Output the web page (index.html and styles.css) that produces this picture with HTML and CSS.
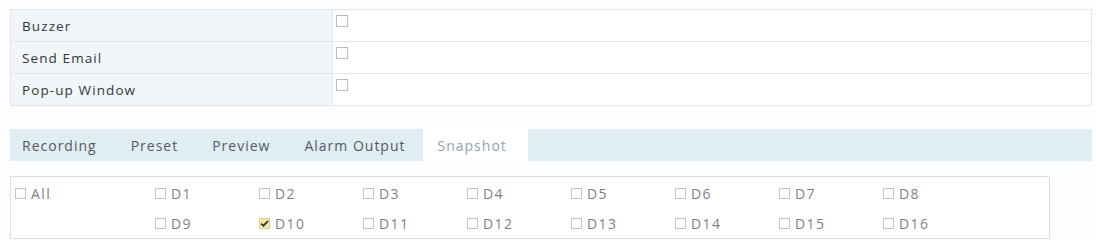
FILE: index.html
```html
<!DOCTYPE html>
<html>
<head>
<meta charset="utf-8">
<link rel="stylesheet" href="styles.css">
</head>
<body>
<div class="page">
  <div class="table">
    <div class="row"><div class="label">Buzzer</div><div class="value"><span class="cb"></span></div></div>
    <div class="row"><div class="label">Send Email</div><div class="value"><span class="cb"></span></div></div>
    <div class="row"><div class="label">Pop-up Window</div><div class="value"><span class="cb"></span></div></div>
  </div>

  <div class="tabs">
    <div class="tab">Recording</div>
    <div class="tab">Preset</div>
    <div class="tab">Preview</div>
    <div class="tab">Alarm Output</div>
    <div class="tab active">Snapshot</div>
    <div class="tab-fill"></div>
  </div>

  <div class="channels">
    <label class="ch"><span class="cb"></span>All</label>
    <label class="ch"><span class="cb"></span>D1</label>
    <label class="ch"><span class="cb"></span>D2</label>
    <label class="ch"><span class="cb"></span>D3</label>
    <label class="ch"><span class="cb"></span>D4</label>
    <label class="ch"><span class="cb"></span>D5</label>
    <label class="ch"><span class="cb"></span>D6</label>
    <label class="ch"><span class="cb"></span>D7</label>
    <label class="ch"><span class="cb"></span>D8</label>
    <span class="ch"></span>
    <label class="ch"><span class="cb"></span>D9</label>
    <label class="ch"><span class="cb checked"><svg viewBox="0 0 11 11" width="11" height="11"><path d="M2.2 5.6 L4.4 7.8 L9 3" fill="none" stroke="#2b2b2b" stroke-width="1.8"/></svg></span>D10</label>
    <label class="ch"><span class="cb"></span>D11</label>
    <label class="ch"><span class="cb"></span>D12</label>
    <label class="ch"><span class="cb"></span>D13</label>
    <label class="ch"><span class="cb"></span>D14</label>
    <label class="ch"><span class="cb"></span>D15</label>
    <label class="ch"><span class="cb"></span>D16</label>
  </div>
</div>
</body>
</html>
```
FILE: styles.css
```css
html, body {
  margin: 0;
  padding: 0;
  background: #fbfdfe;
}
.page {
  padding: 9px 4px 0 10px;
  font-family: "Open Sans", "DejaVu Sans", sans-serif;
  font-size: 13.5px;
  letter-spacing: 1.1px;
}
.table {
  border: 1px solid #dfe5e8;
  border-bottom: none;
  width: 1080px;
}
.row {
  display: flex;
  height: 31px;
  border-bottom: 1px solid #dfe5e8;
}
.label {
  width: 322px;
  background: #f2f6f9;
  border-right: 1px solid #e3e8eb;
  color: #333638;
  display: flex;
  align-items: center;
  padding-left: 11px;
  box-sizing: border-box;
}
.value {
  flex: 1;
  background: #ffffff;
  display: flex;
  align-items: flex-start;
  padding: 5px 0 0 3px;
}
.cb {
  display: inline-block;
  width: 9px;
  height: 9px;
  border: 1px solid #c2c5c7;
  background: #fff;
  flex: none;
  position: relative;
}
.value .cb {
  width: 10px;
  height: 10px;
  border-color: #b9bcbe;
}
.cb.checked {
  background: #f3e7a6;
  border-color: #d9cf9a;
}
.cb.checked svg {
  position: absolute;
  left: -1px;
  top: -1px;
}
.tabs {
  display: flex;
  margin-top: 23px;
  height: 32px;
  width: 1082px;
  font-size: 14px;
  letter-spacing: 1px;
}
.tab {
  background: #e0edf3;
  color: #555b60;
  display: flex;
  align-items: center;
  padding: 0 17px;
}
.tab:first-child {
  padding-left: 12px;
}
.tab.active {
  background: #ffffff;
  color: #8fa4b2;
  padding: 0 21px 0 15px;
}
.tab-fill {
  flex: 1;
  background: #e0edf3;
}
.channels {
  margin-top: 15px;
  width: 1040px;
  height: 63px;
  box-sizing: border-box;
  border: 1px solid #dcdfe1;
  background: #fff;
  display: grid;
  grid-template-columns: 140px repeat(8, 104px);
  grid-auto-rows: 30px;
  padding: 1px 0 0 4px;
  color: #7d8184;
  font-size: 14px;
  letter-spacing: 1.4px;
}
.ch {
  display: flex;
  align-items: center;
  gap: 5px;
}
```
